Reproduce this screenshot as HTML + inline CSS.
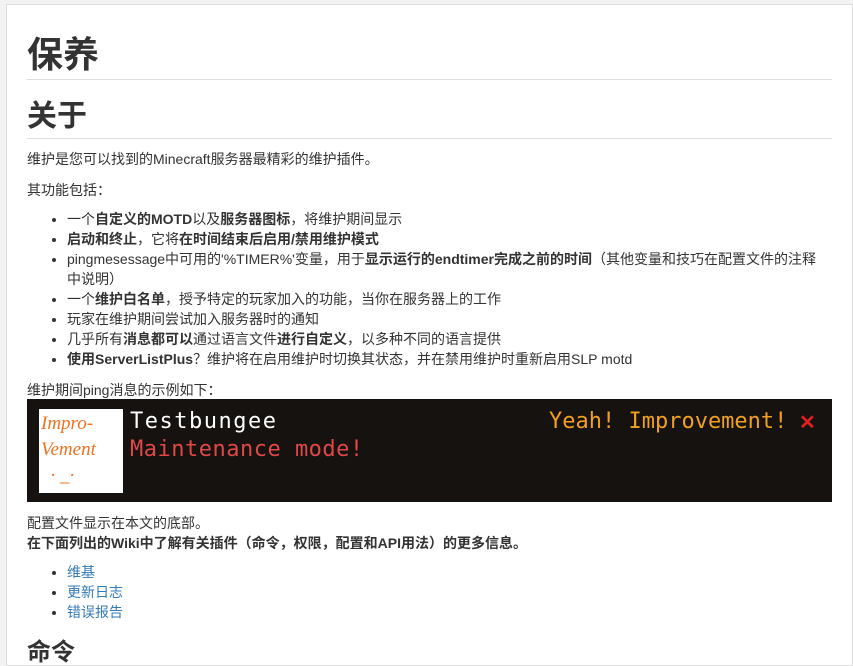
<!DOCTYPE html>
<html><head><meta charset="utf-8"><style>
html,body{margin:0;padding:0;background:#f2f2f2;overflow:hidden;}
body{width:853px;height:645px;font-family:"Liberation Sans","Noto Sans CJK SC",sans-serif;font-size:14px;color:#333;}
.panel{position:absolute;left:6px;top:4px;width:845px;height:660px;background:#fff;border:1px solid #ddd;}
.c{position:absolute;left:20px;top:0;width:805px;}
h1{font-size:36px;font-weight:bold;margin:0;position:absolute;top:28px;line-height:44px;}
.hr1{position:absolute;top:74px;left:0;width:805px;height:1px;background:#ddd;}
h2{font-size:30px;font-weight:bold;margin:0;position:absolute;top:92px;line-height:40px;}
.hr2{position:absolute;top:133px;left:0;width:805px;height:1px;background:#ddd;}
.t{position:absolute;left:0;line-height:20px;white-space:nowrap;}
ul{position:absolute;left:0;margin:0;padding-left:40px;line-height:20px;width:755px;}
li{margin:0;}
a{color:#337ab7;text-decoration:none;}
.img{position:absolute;left:0;top:394px;width:805px;height:103px;background:#161210;}
.mc{font-family:"DejaVu Sans Mono","Liberation Mono",monospace;position:absolute;white-space:nowrap;font-size:22px;}
</style></head><body>
<div class="panel"><div class="c">
<h1>保养</h1><div class="hr1"></div>
<h2>关于</h2><div class="hr2"></div>
<div class="t" style="top:144px">维护是您可以找到的Minecraft服务器最精彩的维护插件。</div>
<div class="t" style="top:175px">其功能包括：</div>
<ul style="top:204px">
<li>一个<b>自定义的MOTD</b>以及<b>服务器图标</b>，将维护期间显示</li>
<li><b>启动和终止</b>，它将<b>在时间结束后启用/禁用维护模式</b></li>
<li>pingmesessage中可用的'%TIMER%'变量，用于<b>显示运行的endtimer完成之前的时间</b>（其他变量和技巧在配置文件的注释<br>中说明）</li>
<li>一个<b>维护白名单</b>，授予特定的玩家加入的功能，当你在服务器上的工作</li>
<li>玩家在维护期间尝试加入服务器时的通知</li>
<li>几乎所有<b>消息都可以</b>通过语言文件<b>进行自定义</b>，以多种不同的语言提供</li>
<li><b>使用ServerListPlus</b>？维护将在启用维护时切换其状态，并在禁用维护时重新启用SLP motd</li>
</ul>
<div class="t" style="top:375px">维护期间ping消息的示例如下：</div>
<div class="img">
<div style="position:absolute;left:12px;top:10px;width:84px;height:84px;background:#fff;"></div>
<div style="position:absolute;left:14px;top:12px;color:#f07020;font-family:'Liberation Serif',serif;font-style:italic;font-size:19px;line-height:26px;">Impro-<br>Vement<br>&nbsp;&nbsp;· _·</div>
<div class="mc" style="left:103px;top:10px;color:#fff;letter-spacing:1.5px;">Testbungee</div>
<div class="mc" style="left:103px;top:38px;color:#e04848;letter-spacing:0.5px;">Maintenance mode!</div>
<div class="mc" style="left:522px;top:10px;color:#f0a020;">Yeah! Improvement!</div>
<div style="position:absolute;left:772px;top:14px;color:#e02020;font-size:20px;font-weight:bold;line-height:20px;">✕</div>
</div>
<div class="t" style="top:508px">配置文件显示在本文的底部。</div>
<div class="t" style="top:528px"><b>在下面列出的Wiki中了解有关插件（命令，权限，配置和API用法）的更多信息。</b></div>
<ul style="top:557px">
<li><a>维基</a></li><li><a>更新日志</a></li><li><a>错误报告</a></li>
</ul>
<div class="t" style="top:638px;font-size:24px;font-weight:bold;">命令</div>
</div></div>
</body></html>
